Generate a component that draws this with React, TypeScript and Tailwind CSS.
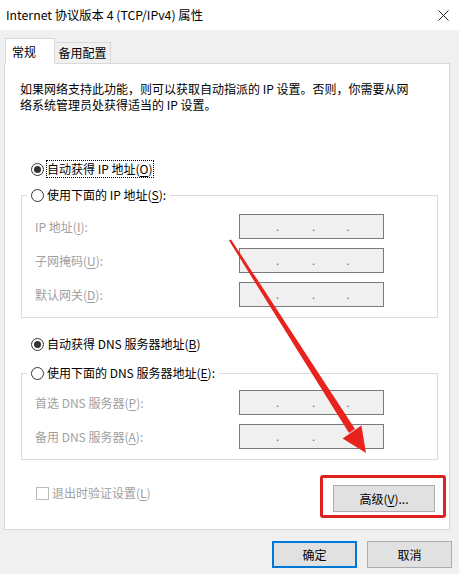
function Radio({ checked }: { checked?: boolean }) {
  return (
    <span className="w-[13px] h-[13px] shrink-0 rounded-full border border-[#333333] bg-white flex items-center justify-center">
      {checked && <span className="w-[7px] h-[7px] rounded-full bg-[#333333]" />}
    </span>
  );
}

function IpBox() {
  return (
    <div className="w-[145px] h-[25px] border border-[#7a7a7a] bg-[#f0f0f0] flex items-center text-[#6d6d6d] text-[11px] leading-none">
      <span className="ml-[36px]">.</span>
      <span className="ml-[33px]">.</span>
      <span className="ml-[31px]">.</span>
    </div>
  );
}

function FieldRow({ label, keyChar, after }: { label: string; keyChar: string; after?: string }) {
  return (
    <div className="flex items-center h-[25px] pl-[13px]">
      <span className="w-[204px] text-[#a0a0a0] whitespace-nowrap">
        {label}(<u className="underline-offset-2">{keyChar}</u>){after ?? ":"}
      </span>
      <IpBox />
    </div>
  );
}

function App() {
  return (
    <div className="relative w-[459px] h-[574px] overflow-hidden bg-[#f0f0f0] text-black text-[12px] leading-[16px] font-['Noto_Sans_CJK_SC','Noto_Sans',sans-serif]">
      {/* title bar */}
      <div className="h-[30px] bg-white flex items-center justify-between pl-[6px] pr-[10px]">
        <span className="whitespace-nowrap text-[12.3px]">Internet 协议版本 4 (TCP/IPv4) 属性</span>
        <svg width="11" height="11" viewBox="0 0 11 11" className="text-[#222]">
          <path d="M0.5 0.5 L10.5 10.5 M10.5 0.5 L0.5 10.5" stroke="currentColor" strokeWidth="1" />
        </svg>
      </div>

      {/* tabs */}
      <div className="relative z-10 flex items-end pt-[8px] pl-[5px] -mb-[1px]">
        <div className="w-[50px] h-[26px] bg-white border border-b-0 border-[#d9d9d9] flex items-center pl-[6px] pt-[1px]">
          常规
        </div>
        <div className="w-[56px] h-[22px] bg-[#f0f0f0] border border-l-0 border-[#d9d9d9] flex items-center justify-center">
          备用配置
        </div>
      </div>

      {/* panel */}
      <div className="mx-[4px] w-[446px] h-[467px] bg-white border border-[#d9d9d9] pt-[17px] pl-[15px]">
        <p className="whitespace-nowrap">
          如果网络支持此功能，则可以获取自动指派的 IP 设置。否则，你需要从网
          <br />
          络系统管理员处获得适当的 IP 设置。
        </p>

        <div className="mt-[47px] ml-[11px] h-[18px] flex items-center">
          <Radio checked />
          <span className="ml-[2px] px-[1px] h-[18px] flex items-center outline outline-1 outline-dotted outline-black -outline-offset-1">
            自动获得 IP 地址(<u className="underline-offset-2">O</u>)
          </span>
        </div>

        <div className="mt-[17px] ml-[1px] w-[417px] border border-[#dcdcdc] pb-[10px]">
          <div className="-mt-[10px] ml-[5px] px-[4px] w-fit h-[18px] bg-white flex items-center gap-[3px]">
            <Radio />
            <span>
              使用下面的 IP 地址(<u className="underline-offset-2">S</u>):
            </span>
          </div>
          <div className="mt-[10px] flex flex-col gap-[9px]">
            <FieldRow label="IP 地址" keyChar="I" />
            <FieldRow label="子网掩码" keyChar="U" />
            <FieldRow label="默认网关" keyChar="D" />
          </div>
        </div>

        <div className="mt-[17px] ml-[11px] h-[18px] flex items-center gap-[3px]">
          <Radio checked />
          <span>
            自动获得 DNS 服务器地址(<u className="underline-offset-2">B</u>)
          </span>
        </div>

        <div className="mt-[20px] ml-[1px] w-[417px] border border-[#dcdcdc] pb-[10px]">
          <div className="-mt-[10px] ml-[5px] px-[4px] w-fit h-[18px] bg-white flex items-center gap-[3px]">
            <Radio />
            <span>
              使用下面的 DNS 服务器地址(<u className="underline-offset-2">E</u>):
            </span>
          </div>
          <div className="mt-[8px] flex flex-col gap-[9px]">
            <FieldRow label="首选 DNS 服务器" keyChar="P" />
            <FieldRow label="备用 DNS 服务器" keyChar="A" />
          </div>
        </div>

        <div className="mt-[15px] flex items-start justify-between pr-[3px]">
          <div className="mt-[9px] ml-[16px] h-[18px] flex items-center gap-[3px] text-[#a0a0a0]">
            <span className="w-[13px] h-[13px] border border-[#bcbcbc] bg-white" />
            <span>
              退出时验证设置(<u className="underline-offset-2">L</u>)
            </span>
          </div>
          <div className="w-[126px] h-[43px] border-[3px] border-[#e0201e] rounded-[3px] pl-[10px] pt-[7px]">
            <button className="w-[102px] h-[27px] bg-[#e1e1e1] border border-[#adadad] flex items-center justify-center">
              高级(<u className="underline-offset-2">V</u>)...
            </button>
          </div>
        </div>
      </div>

      {/* dialog buttons */}
      <div className="mt-[11px] flex justify-end gap-[10px] pr-[7px]">
        <button className="w-[85px] h-[27px] bg-[#e1e1e1] border-2 border-[#0078d7] flex items-center justify-center">
          确定
        </button>
        <button className="w-[85px] h-[27px] bg-[#e1e1e1] border border-[#adadad] flex items-center justify-center">
          取消
        </button>
      </div>

      {/* red annotation arrow */}
      <svg className="absolute inset-0 pointer-events-none" width="459" height="574" viewBox="0 0 459 574">
        <polygon points="229,240.6 231,239.4 355,429 349,433" fill="#e8231d" />
        <polygon points="366,453 342.6,438.5 361.4,425.5" fill="#e8231d" />
      </svg>
    </div>
  );
}

export default App;
